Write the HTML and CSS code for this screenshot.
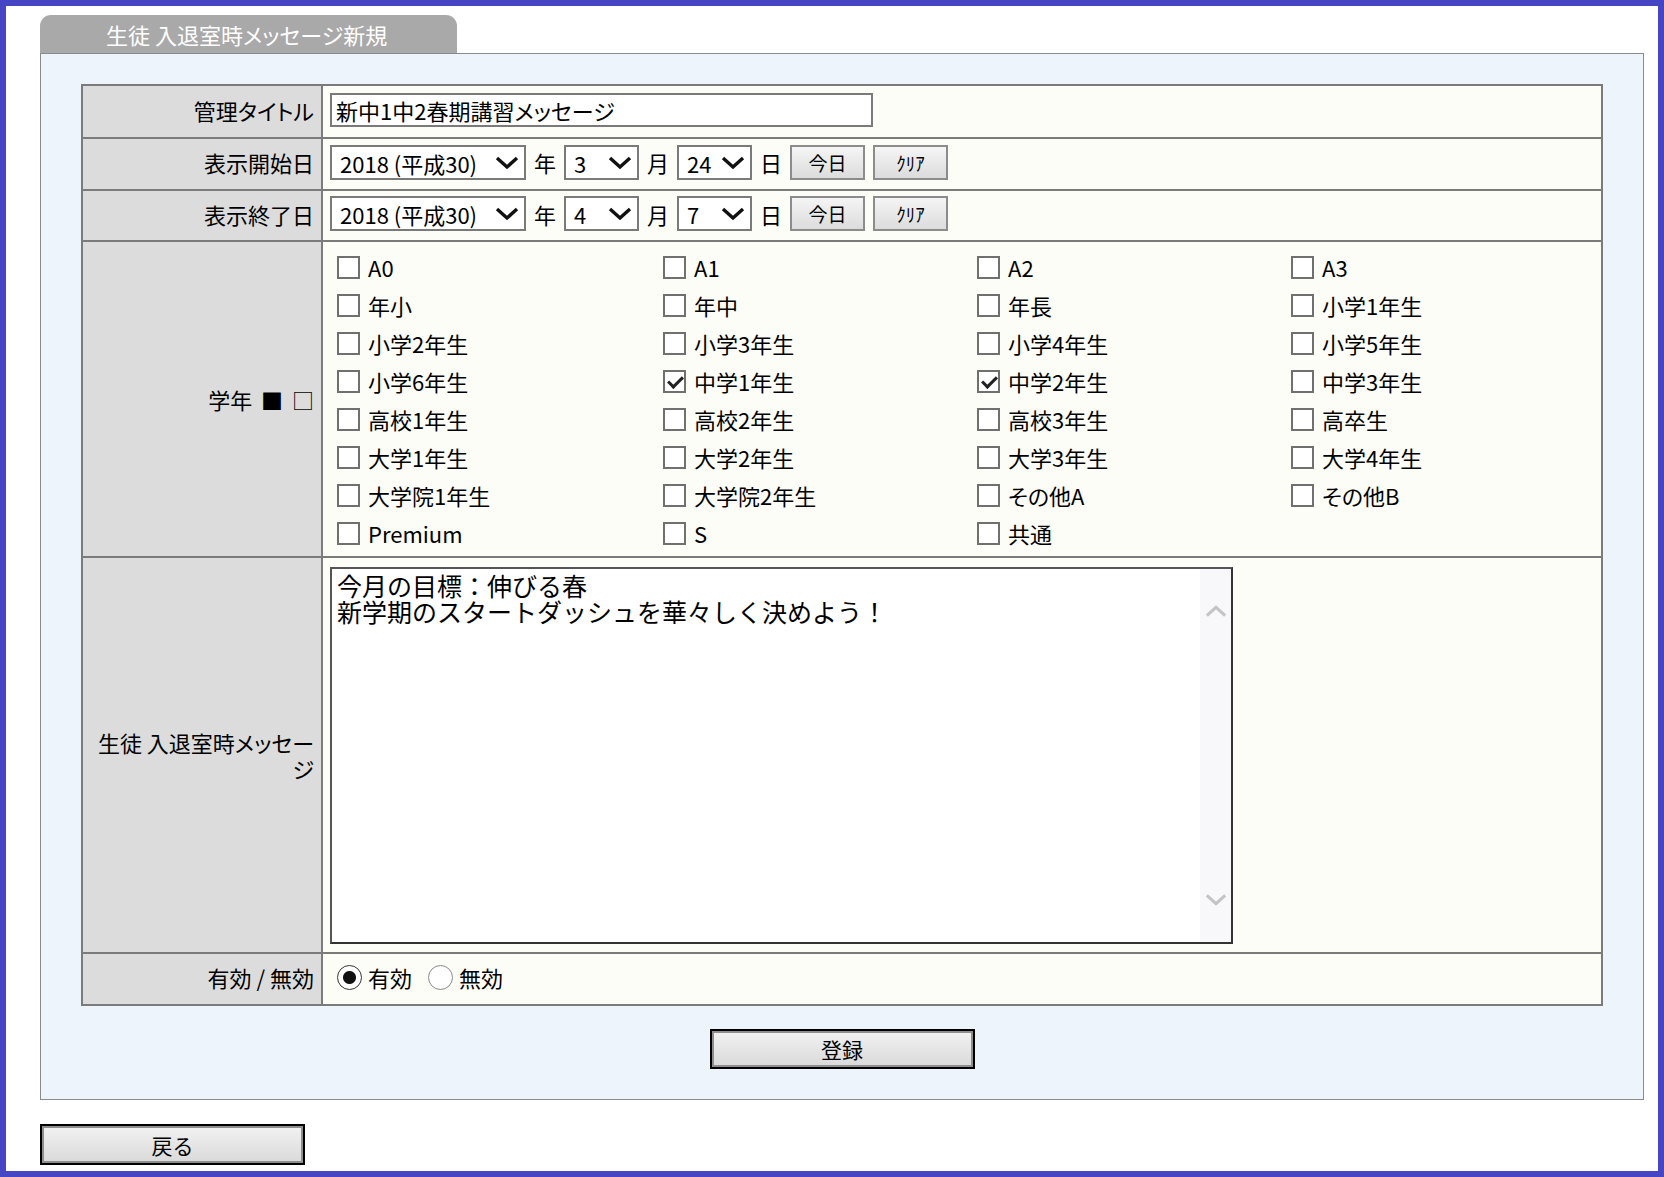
FILE: index.html
```html
<!DOCTYPE html>
<html lang="ja">
<head>
    <meta charset="UTF-8">
    <meta name="viewport" content="width=device-width, initial-scale=1.0">
    <title>生徒 入退室時メッセージ新規</title>
    <link rel="stylesheet" href="styles.css">
</head>
<body>

<div class="frame">
    <div class="tab">生徒 入退室時メッセージ新規</div>

    <div class="panel">
        <table class="form-table">
            <tr class="row-title">
                <th>管理タイトル</th>
                <td><input type="text" class="title-input" value="新中1中2春期講習メッセージ"></td>
            </tr>
            <tr class="row-date">
                <th>表示開始日</th>
                <td>
                    <div class="date-line">
                        <span class="sel sel-year">
                            <select><option>2018 (平成30)</option></select>
                            <svg class="chev" viewBox="0 0 24 14"><path d="M2 2 L12 11 L22 2" /></svg>
                        </span>
                        <span>年</span>
                        <span class="sel sel-small">
                            <select><option>3</option></select>
                            <svg class="chev" viewBox="0 0 24 14"><path d="M2 2 L12 11 L22 2" /></svg>
                        </span>
                        <span>月</span>
                        <span class="sel sel-small">
                            <select><option>24</option></select>
                            <svg class="chev" viewBox="0 0 24 14"><path d="M2 2 L12 11 L22 2" /></svg>
                        </span>
                        <span>日</span>
                        <button type="button" class="btn-small">今日</button>
                        <button type="button" class="btn-small">ｸﾘｱ</button>
                    </div>
                </td>
            </tr>
            <tr class="row-date2">
                <th>表示終了日</th>
                <td>
                    <div class="date-line">
                        <span class="sel sel-year">
                            <select><option>2018 (平成30)</option></select>
                            <svg class="chev" viewBox="0 0 24 14"><path d="M2 2 L12 11 L22 2" /></svg>
                        </span>
                        <span>年</span>
                        <span class="sel sel-small">
                            <select><option>4</option></select>
                            <svg class="chev" viewBox="0 0 24 14"><path d="M2 2 L12 11 L22 2" /></svg>
                        </span>
                        <span>月</span>
                        <span class="sel sel-small">
                            <select><option>7</option></select>
                            <svg class="chev" viewBox="0 0 24 14"><path d="M2 2 L12 11 L22 2" /></svg>
                        </span>
                        <span>日</span>
                        <button type="button" class="btn-small">今日</button>
                        <button type="button" class="btn-small">ｸﾘｱ</button>
                    </div>
                </td>
            </tr>
            <tr class="row-grade">
                <th>学年 <span class="marks">■ □</span></th>
                <td>
                    <div class="grades">
                        <label><input type="checkbox">A0</label>
                        <label><input type="checkbox">A1</label>
                        <label><input type="checkbox">A2</label>
                        <label><input type="checkbox">A3</label>
                        <label><input type="checkbox">年小</label>
                        <label><input type="checkbox">年中</label>
                        <label><input type="checkbox">年長</label>
                        <label><input type="checkbox">小学1年生</label>
                        <label><input type="checkbox">小学2年生</label>
                        <label><input type="checkbox">小学3年生</label>
                        <label><input type="checkbox">小学4年生</label>
                        <label><input type="checkbox">小学5年生</label>
                        <label><input type="checkbox">小学6年生</label>
                        <label><input type="checkbox" checked>中学1年生</label>
                        <label><input type="checkbox" checked>中学2年生</label>
                        <label><input type="checkbox">中学3年生</label>
                        <label><input type="checkbox">高校1年生</label>
                        <label><input type="checkbox">高校2年生</label>
                        <label><input type="checkbox">高校3年生</label>
                        <label><input type="checkbox">高卒生</label>
                        <label><input type="checkbox">大学1年生</label>
                        <label><input type="checkbox">大学2年生</label>
                        <label><input type="checkbox">大学3年生</label>
                        <label><input type="checkbox">大学4年生</label>
                        <label><input type="checkbox">大学院1年生</label>
                        <label><input type="checkbox">大学院2年生</label>
                        <label><input type="checkbox">その他A</label>
                        <label><input type="checkbox">その他B</label>
                        <label><input type="checkbox">Premium</label>
                        <label><input type="checkbox">S</label>
                        <label><input type="checkbox">共通</label>
                    </div>
                </td>
            </tr>
            <tr class="row-msg">
                <th>生徒 入退室時メッセージ</th>
                <td>
                    <div class="msg-box">
                        <textarea>今月の目標：伸びる春
新学期のスタートダッシュを華々しく決めよう！</textarea>
                        <div class="scroll-track">
                            <svg class="scroll-arrow" viewBox="0 0 24 14"><path d="M2 12 L12 3 L22 12" /></svg>
                            <svg class="scroll-arrow" viewBox="0 0 24 14"><path d="M2 2 L12 11 L22 2" /></svg>
                        </div>
                    </div>
                </td>
            </tr>
            <tr class="row-valid">
                <th>有効 / 無効</th>
                <td>
                    <div class="radios">
                        <label><input type="radio" name="valid" checked>有効</label>
                        <label><input type="radio" name="valid">無効</label>
                    </div>
                </td>
            </tr>
        </table>

        <div class="submit-row">
            <button type="button" class="btn-big">登録</button>
        </div>
    </div>

    <button type="button" class="btn-big btn-back">戻る</button>
</div>

</body>
</html>
```

FILE: styles.css
```css
/* 全体 */
body {
    margin: 0;
    font-family: "Noto Sans CJK JP", "Noto Sans", sans-serif;
    font-size: 22px;
    color: #000;
    font-feature-settings: "palt";
}

.frame {
    box-sizing: border-box;
    min-height: 100vh;
    border: 6px solid #4646c4;
    background-color: #fff;
    padding-top: 9px;
}

/* タイトルタブ */
.tab {
    width: 351px;
    height: 38px;
    margin-left: 34px;
    padding-left: 66px;
    background-color: #a9a9a9;
    border-radius: 11px 11px 0 0;
    color: #fff;
    font-size: 22px;
    line-height: 38px;
}

.panel {
    margin: 0 14px 0 34px;
    padding: 30px 40px 30px 40px;
    background-color: #edf4fc;
    border: 1px solid #8a8a8a;
}

/* フォーム表 */
.form-table {
    width: 100%;
    border-collapse: collapse;
    border: 2px solid #7b7b7b;
}

.form-table th,
.form-table td {
    border: 2px solid #7b7b7b;
    padding: 0 0 4px 0;
}

.form-table th {
    box-sizing: border-box;
    width: 240px;
    padding: 0 7px 4px 12px;
    background-color: #dcdcdc;
    font-weight: normal;
    text-align: right;
    line-height: 26px;
}

.form-table td {
    background-color: #fdfdf8;
    padding-left: 7px;
}

.row-title th { height: 53px; }
.row-date th { height: 52px; }
.row-date2 th { height: 51px; }
.row-grade th { height: 316px; padding-bottom: 0; }
.row-msg th { height: 396px; padding-bottom: 0; }
.row-valid th { height: 52px; }

.marks {
    margin-left: 4px;
    font-feature-settings: normal;
    word-spacing: 4px;
}

.title-input {
    box-sizing: border-box;
    width: 543px;
    height: 34px;
    padding: 0 4px;
    border: 2px solid #7a7a7a;
    background-color: #fff;
    font-family: inherit;
    font-size: 22px;
    font-feature-settings: "palt";
}

/* 日付 */
.date-line {
    display: flex;
    align-items: center;
    gap: 8px;
}

.sel {
    position: relative;
    display: inline-block;
}

.sel select {
    box-sizing: border-box;
    height: 35px;
    padding: 0 0 0 8px;
    border: 2px solid #7a7a7a;
    border-radius: 0;
    background-color: #fff;
    font-family: inherit;
    font-size: 22px;
    color: #000;
    appearance: none;
    -webkit-appearance: none;
}

.sel-year select { width: 196px; }
.sel-small select { width: 75px; }

.chev {
    position: absolute;
    right: 7px;
    top: 11px;
    width: 24px;
    height: 14px;
    pointer-events: none;
}

.chev path {
    fill: none;
    stroke: #111;
    stroke-width: 3.4;
}

.btn-small {
    box-sizing: border-box;
    width: 75px;
    height: 35px;
    padding: 0;
    border: 2px solid #8c8c8c;
    background: linear-gradient(#f5f5f5, #dcdcdc);
    font-family: inherit;
    font-size: 19px;
    color: #000;
}

/* 学年 */
.row-grade td {
    vertical-align: top;
    padding: 6px 0 0 14px;
}

.grades {
    display: grid;
    grid-template-columns: 326px 314px 314px auto;
    grid-auto-rows: 38px;
}

.grades label {
    display: flex;
    align-items: center;
    gap: 8px;
}

.grades input[type="checkbox"] {
    position: relative;
    box-sizing: border-box;
    width: 23px;
    height: 23px;
    margin: 0;
    border: 2px solid #707070;
    background-color: #fff;
    appearance: none;
    -webkit-appearance: none;
}

.grades input[type="checkbox"]:checked::after {
    content: "";
    position: absolute;
    left: 6px;
    top: 1px;
    width: 6px;
    height: 12px;
    border: solid #222;
    border-width: 0 3px 3px 0;
    transform: rotate(45deg);
}

/* メッセージ */
.row-msg td {
    vertical-align: top;
    padding: 9px 0 0 7px;
}

.msg-box {
    box-sizing: border-box;
    display: flex;
    width: 903px;
    height: 377px;
    border: 2px solid #333;
    border-top-color: #555;
    border-left-color: #555;
    background-color: #fff;
}

.msg-box textarea {
    flex: 1;
    padding: 3px 5px;
    border: none;
    outline: none;
    resize: none;
    overflow: hidden;
    font-family: "Noto Sans CJK JP", sans-serif;
    font-size: 25px;
    line-height: 26px;
    color: #000;
    font-feature-settings: normal;
}

.scroll-track {
    display: flex;
    flex-direction: column;
    justify-content: space-between;
    align-items: center;
    width: 31px;
    padding: 35px 0 35px;
    background-color: #f8f8fa;
}

.scroll-arrow {
    width: 22px;
    height: 14px;
}

.scroll-arrow path {
    fill: none;
    stroke: #c4c4c4;
    stroke-width: 3.4;
}

/* 有効 / 無効 */
.radios {
    display: flex;
    align-items: center;
    gap: 16px;
    padding-left: 7px;
}

.radios label {
    display: flex;
    align-items: center;
    gap: 6px;
}

.radios input[type="radio"] {
    box-sizing: border-box;
    width: 25px;
    height: 25px;
    margin: 0;
    border: 1.5px solid #8a8a8a;
    border-radius: 50%;
    background-color: #fff;
    appearance: none;
    -webkit-appearance: none;
}

.radios input[type="radio"]:checked {
    border-color: #333;
    background: radial-gradient(circle, #111 0 6px, #fff 7px);
}

/* ボタン */
.submit-row {
    display: flex;
    justify-content: center;
    margin-top: 23px;
}

.btn-big {
    box-sizing: border-box;
    width: 265px;
    height: 40px;
    padding: 0;
    border: 2px solid #000;
    box-shadow: inset 0 0 0 2px #8e8e8e;
    background: linear-gradient(#f2f2f2, #d9d9d9);
    font-family: inherit;
    font-size: 21px;
    color: #000;
}

.btn-back {
    display: block;
    height: 41px;
    margin: 24px 0 0 34px;
}
```
